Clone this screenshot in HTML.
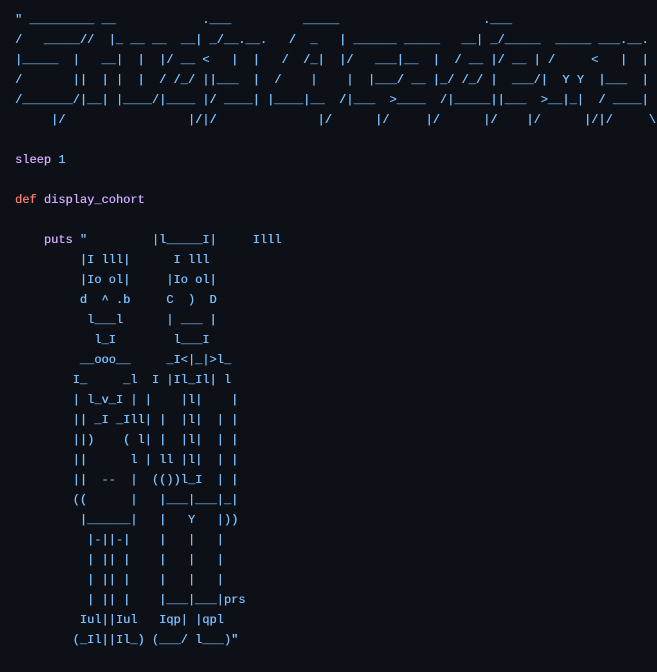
<!DOCTYPE html>
<html><head><meta charset="utf-8"><style>
html,body{margin:0;padding:0;background:#0d1117;width:657px;height:672px;overflow:hidden}
pre{margin:0;position:absolute;left:15px;top:10px;font-family:"Liberation Mono",monospace;font-size:12px;line-height:20px;color:#79c0ff;white-space:pre;text-shadow:0.3px 0 0 currentColor}
.p{color:#d2a8ff}.r{color:#ff7b72}.b{color:#79c0ff}
</style></head><body><pre>" _________ __            .___          _____                    .___
/   _____//  |_ __ __  __| _/__.__.   /  _   | ______ _____   __| _/_____  _____ ___.__.
|_____  |   __|  |  |/ __ &lt;   |  |   /  /_|  |/   ___|__  |  / __ |/ __ | /     &lt;   |  |
/       ||  | |  |  / /_/ ||___  |  /    |    |  |___/ __ |_/ /_/ |  ___/|  Y Y  |___  |
/_______/|__| |____/|____ |/ ____| |____|__  /|___  &gt;____  /|_____||___  &gt;__|_|  / ____|
     |/                 |/|/              |/      |/     |/      |/    |/      |/|/     \

<span class="p">sleep</span> <span class="b">1</span>

<span class="r">def</span> <span class="p">display_cohort</span>

    <span class="p">puts</span> "         |l_____I|     Illl
         |I lll|      I lll
         |Io ol|     |Io ol|
         d  ^ .b     C  )  D
          l___l      | ___ |
           l_I        l___I
         __ooo__     _I&lt;|_|&gt;l_
        I_     _l  I |Il_Il| l
        | l_v_I | |    |l|    |
        || _I _Ill| |  |l|  | |
        ||)    ( l| |  |l|  | |
        ||      l | ll |l|  | |
        ||  --  |  (())l_I  | |
        ((      |   |___|___|_|
         |______|   |   Y   |))
          |-||-|    |   |   |
          | || |    |   |   |
          | || |    |   |   |
          | || |    |___|___|prs
         Iul||Iul   Iqp| |qpl
        (_Il||Il_) (___/ l___)"</pre></body></html>
